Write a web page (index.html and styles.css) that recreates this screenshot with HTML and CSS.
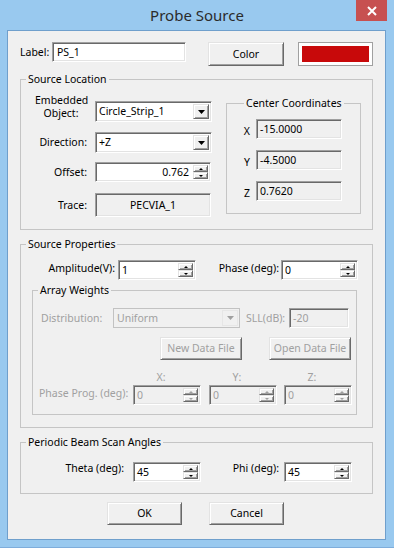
FILE: index.html
```html
<!DOCTYPE html>
<html lang="en">
<head>
    <meta charset="UTF-8">
    <title>Probe Source</title>
    <link rel="stylesheet" href="styles.css">
</head>
<body>
<div class="window">
    <div class="titlebar">
        <div class="title">Probe Source</div>
        <div class="close">
            <svg width="10" height="10" viewBox="0 0 10 10"><path d="M1 1L9 9M9 1L1 9" stroke="#fff" stroke-width="2"/></svg>
        </div>
    </div>

    <div class="client">
        <div class="label-row">
            <span class="label-text">Label:</span>
            <div class="edit label-edit">PS_1</div>
            <div class="btn color-btn">Color</div>
            <div class="swatch"><div class="swatch-fill"></div></div>
        </div>

        <fieldset class="group loc-group">
            <legend>Source Location</legend>
            <div class="loc-body">
                <div class="loc-left">
                    <div class="row row-embedded">
                        <div class="row-label"><div class="two-line">Embedded<br>Object:</div></div>
                        <div class="combo">
                            <span class="field-text">Circle_Strip_1</span>
                            <span class="drop"><svg width="7" height="4" viewBox="0 0 7 4"><path d="M0 0H7L3.5 4Z"/></svg></span>
                        </div>
                    </div>
                    <div class="row row-dir">
                        <div class="row-label">Direction:</div>
                        <div class="combo">
                            <span class="field-text">+Z</span>
                            <span class="drop"><svg width="7" height="4" viewBox="0 0 7 4"><path d="M0 0H7L3.5 4Z"/></svg></span>
                        </div>
                    </div>
                    <div class="row row-offset">
                        <div class="row-label">Offset:</div>
                        <div class="spin offset-spin">
                            <span class="field-text right">0.762</span>
                            <span class="arrows"><span><i class="up"></i></span><span><i class="dn"></i></span></span>
                        </div>
                    </div>
                    <div class="row row-trace">
                        <div class="row-label">Trace:</div>
                        <div class="edit ro trace-box">PECVIA_1</div>
                    </div>
                </div>

                <fieldset class="group center-group">
                    <legend>Center Coordinates</legend>
                    <div class="coord-row first">
                        <span class="coord-label">X</span>
                        <div class="edit ro coord-box">-15.0000</div>
                    </div>
                    <div class="coord-row">
                        <span class="coord-label">Y</span>
                        <div class="edit ro coord-box">-4.5000</div>
                    </div>
                    <div class="coord-row">
                        <span class="coord-label">Z</span>
                        <div class="edit ro coord-box">0.7620</div>
                    </div>
                </fieldset>
            </div>
        </fieldset>

        <fieldset class="group props-group">
            <legend>Source Properties</legend>
            <div class="amp-row">
                <span class="amp-label">Amplitude(V):</span>
                <div class="spin amp-spin">
                    <span class="field-text">1</span>
                    <span class="arrows"><span><i class="up"></i></span><span><i class="dn"></i></span></span>
                </div>
                <span class="phase-label">Phase (deg):</span>
                <div class="spin phase-spin">
                    <span class="field-text">0</span>
                    <span class="arrows"><span><i class="up"></i></span><span><i class="dn"></i></span></span>
                </div>
            </div>

            <fieldset class="group array-group">
                <legend>Array Weights</legend>
                <div class="dist-row disabled">
                    <span class="dist-label">Distribution:</span>
                    <div class="combo off dist-combo">
                        <span class="field-text">Uniform</span>
                        <span class="drop"><svg width="7" height="4" viewBox="0 0 7 4"><path d="M0 0H7L3.5 4Z"/></svg></span>
                    </div>
                    <span class="sll-label">SLL(dB):</span>
                    <div class="edit ro sll-edit">-20</div>
                </div>
                <div class="file-row disabled">
                    <div class="btn">New Data File</div>
                    <div class="btn">Open Data File</div>
                </div>
                <div class="axis-row disabled">
                    <span class="axis">X:</span>
                    <span class="axis axis-y">Y:</span>
                    <span class="axis axis-z">Z:</span>
                </div>
                <div class="prog-row disabled">
                    <span class="prog-label">Phase Prog. (deg):</span>
                    <div class="spin ro prog-spin">
                        <span class="field-text">0</span>
                        <span class="arrows"><span><i class="up"></i></span><span><i class="dn"></i></span></span>
                    </div>
                    <div class="spin ro prog-spin prog-y">
                        <span class="field-text">0</span>
                        <span class="arrows"><span><i class="up"></i></span><span><i class="dn"></i></span></span>
                    </div>
                    <div class="spin ro prog-spin prog-z">
                        <span class="field-text">0</span>
                        <span class="arrows"><span><i class="up"></i></span><span><i class="dn"></i></span></span>
                    </div>
                </div>
            </fieldset>
        </fieldset>

        <fieldset class="group periodic-group">
            <legend>Periodic Beam Scan Angles</legend>
            <div class="scan-row">
                <span class="theta-label">Theta (deg):</span>
                <div class="spin scan-spin">
                    <span class="field-text">45</span>
                    <span class="arrows"><span><i class="up"></i></span><span><i class="dn"></i></span></span>
                </div>
                <span class="phi-label">Phi (deg):</span>
                <div class="spin scan-spin">
                    <span class="field-text">45</span>
                    <span class="arrows"><span><i class="up"></i></span><span><i class="dn"></i></span></span>
                </div>
            </div>
        </fieldset>

        <div class="dialog-buttons">
            <div class="btn">OK</div>
            <div class="btn">Cancel</div>
        </div>
    </div>
</div>
</body>
</html>
```

FILE: styles.css
```css
* {
    box-sizing: border-box;
}

body {
    margin: 0;
    background-color: #99c9ef;
    font-family: 'Noto Sans', 'DejaVu Sans', sans-serif;
    font-size: 10.5px;
    line-height: 13px;
    color: #000;
}

.window {
    width: 394px;
    height: 548px;
    border-bottom: 1px solid #7eaddb;
}

/* title bar */

.titlebar {
    height: 30px;
    display: grid;
    grid-template-columns: 38px 1fr 38px;
}

.title {
    grid-column: 2;
    text-align: center;
    font-size: 15px;
    line-height: 30px;
    color: #2b2b2b;
}

.close {
    width: 31px;
    height: 21px;
    background-color: #c75050;
    display: flex;
    align-items: center;
    justify-content: center;
}

/* dialog body */

.client {
    margin-left: 7px;
    width: 379px;
    height: 510px;
    border: 1px solid #6f9fcc;
    background-color: #f0f0f0;
    padding-top: 11px;
}

.label-row {
    display: flex;
    align-items: flex-start;
    padding-left: 12px;
    height: 24px;
}

.label-text {
    width: 32px;
    line-height: 20px;
}

.label-edit {
    width: 134px;
}

.color-btn {
    margin-left: 22px;
    width: 76px;
    height: 24px;
}

.swatch {
    margin-left: 14px;
    width: 75px;
    height: 24px;
    border: 1px solid #a0a0a0;
    padding: 3px;
    background-color: #fff;
}

.swatch-fill {
    height: 100%;
    background-color: #c8090a;
}

/* common controls */

.edit,
.combo,
.spin {
    height: 20px;
    background-color: #fff;
    border: 1px solid;
    border-color: #a0a0a0 #fff #fff #a0a0a0;
    box-shadow: inset 1px 1px 0 #696969, inset -1px -1px 0 #e3e3e3;
    white-space: nowrap;
    overflow: hidden;
}

.edit {
    padding: 0 4px;
    line-height: 18px;
}

.ro {
    background-color: #f0f0f0;
}

.combo,
.spin {
    display: flex;
}

.combo {
    height: 21px;
}

.field-text {
    flex: 1;
    padding-left: 3px;
    line-height: 18px;
}

.combo .field-text {
    line-height: 19px;
}

.field-text.right {
    text-align: right;
    padding-right: 4px;
}

.btn,
.drop,
.arrows span {
    background-color: #f0f0f0;
    border: 1px solid;
    border-color: #e3e3e3 #696969 #696969 #e3e3e3;
    box-shadow: inset 1px 1px 0 #fff, inset -1px -1px 0 #a0a0a0;
    display: flex;
    align-items: center;
    justify-content: center;
}

.drop {
    width: 16px;
    margin: 2px 2px 2px 0;
}

.arrows {
    width: 15px;
    margin: 2px 2px 2px 0;
    display: flex;
    flex-direction: column;
}

.arrows span {
    flex: 1;
}

.up,
.dn {
    width: 0;
    height: 0;
    border-left: 2px solid transparent;
    border-right: 2px solid transparent;
}

.up {
    border-bottom: 2px solid #000;
}

.dn {
    border-top: 2px solid #000;
}

/* group boxes */

.group {
    margin: 0;
    padding: 0;
    border: 1px solid #c5c5c5;
    min-width: 0;
}

.group legend {
    margin-left: 5px;
    padding: 0 2px;
    line-height: 15px;
}

.loc-group {
    margin: 6px 0 0 12px;
    width: 353px;
    padding-bottom: 12px;
}

.loc-body {
    display: flex;
    align-items: flex-start;
}

.loc-left {
    margin-top: 7px;
    width: 191px;
}

.row {
    display: flex;
    align-items: center;
}

.row-label {
    width: 66px;
    margin-right: 8px;
    text-align: right;
}

.row-embedded {
    align-items: flex-end;
}

.two-line {
    width: 52px;
    margin-left: auto;
    margin-bottom: 2px;
    text-align: center;
}

.row .combo {
    width: 117px;
}

.row-dir {
    margin-top: 10px;
}

.row-offset {
    margin-top: 9px;
}

.offset-spin {
    width: 116px;
}

.row-trace {
    margin-top: 11px;
}

.trace-box {
    width: 116px;
    height: 24px;
    line-height: 22px;
    text-align: center;
}

.center-group {
    margin: 9px 0 0 14px;
    width: 135px;
    padding-bottom: 12px;
}

.center-group legend {
    margin-left: 17px;
}

.coord-row {
    display: flex;
    align-items: flex-end;
    margin-top: 11px;
}

.coord-row.first {
    margin-top: 8px;
}

.coord-label {
    width: 23px;
    margin-right: 6px;
    margin-bottom: 1px;
    text-align: right;
}

.coord-box {
    width: 86px;
    padding-left: 3px;
}

/* source properties */

.props-group {
    margin: 7px 0 0 12px;
    width: 353px;
    padding-bottom: 12px;
}

.amp-row {
    display: flex;
    align-items: flex-start;
    margin-top: 8px;
}

.amp-label {
    width: 94px;
    margin: 2px 3px 0 0;
    text-align: right;
}

.amp-spin {
    width: 78px;
}

.phase-label {
    width: 83px;
    margin: 2px 2px 0 0;
    text-align: right;
}

.phase-spin {
    width: 77px;
}

.array-group {
    margin: 3px 0 0 11px;
    width: 325px;
    padding-bottom: 9px;
}

.disabled {
    color: #a0a0a0;
}

.disabled .up {
    border-bottom-color: #a0a0a0;
}

.disabled .dn {
    border-top-color: #a0a0a0;
}

.dist-row {
    display: flex;
    align-items: center;
    margin-top: 10px;
}

.dist-label {
    width: 80px;
    padding-left: 8px;
}

.combo.off {
    height: 20px;
    background-color: #f0f0f0;
    border-color: #c2c2c2;
    box-shadow: none;
}

.combo.off .field-text {
    line-height: 18px;
}

.combo.off .drop {
    margin: 1px;
    border-color: #e6e6e6;
    box-shadow: none;
}

.combo.off path {
    fill: #a0a0a0;
}

.dist-combo {
    width: 127px;
}

.sll-label {
    margin-left: 6px;
    width: 43px;
}

.sll-edit {
    width: 60px;
    padding-left: 3px;
}

.file-row {
    display: flex;
    margin-top: 9px;
    padding-left: 127px;
    gap: 27px;
}

.file-row .btn {
    width: 82px;
    height: 23px;
}

.axis-row {
    display: flex;
    margin-top: 10px;
    padding-left: 100px;
    line-height: 14px;
}

.axis {
    width: 68px;
    padding-right: 12px;
    text-align: center;
}

.axis-y {
    margin-left: 8px;
}

.axis-z {
    margin-left: 7px;
}

.prog-row {
    display: flex;
    align-items: flex-start;
    margin-top: 1px;
}

.prog-label {
    width: 100px;
    padding-left: 6px;
    line-height: 16px;
}

.prog-spin {
    width: 68px;
}

.prog-y {
    margin-left: 8px;
}

.prog-z {
    margin-left: 7px;
}

/* periodic scan */

.periodic-group {
    margin: 7px 0 0 12px;
    width: 353px;
    padding-bottom: 11px;
}

.scan-row {
    display: flex;
    align-items: flex-start;
    margin-top: 12px;
}

.theta-label {
    width: 103px;
    margin-right: 9px;
    text-align: right;
}

.scan-spin {
    width: 68px;
}

.phi-label {
    width: 78px;
    margin-right: 5px;
    text-align: right;
}

.dialog-buttons {
    display: flex;
    gap: 27px;
    margin-top: 8px;
    padding-left: 99px;
}

.dialog-buttons .btn {
    width: 75px;
    height: 23px;
}
```
